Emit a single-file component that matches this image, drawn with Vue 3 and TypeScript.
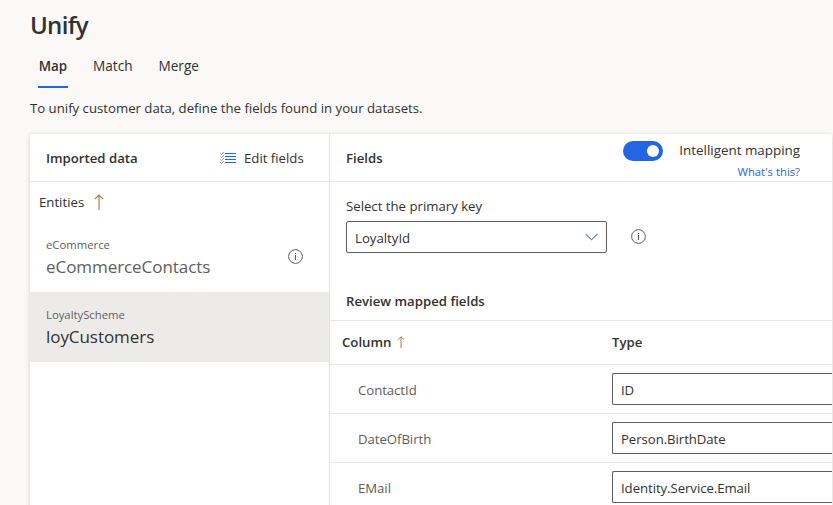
<script setup lang="ts">
import { ref } from 'vue'

interface Entity {
  source: string
  name: string
  info: boolean
}

interface MappedField {
  column: string
  type: string
}

const tabs = ['Map', 'Match', 'Merge']
const activeTab = ref('Map')

const entities: Entity[] = [
  { source: 'eCommerce', name: 'eCommerceContacts', info: true },
  { source: 'LoyaltyScheme', name: 'loyCustomers', info: false },
]
const selectedEntity = ref('loyCustomers')

const mappedFields: MappedField[] = [
  { column: 'ContactId', type: 'ID' },
  { column: 'DateOfBirth', type: 'Person.BirthDate' },
  { column: 'EMail', type: 'Identity.Service.Email' },
]

const intelligentMapping = ref(true)
</script>

<template>
  <main class="page">
    <h1 class="title">Unify</h1>
    <nav class="tabs">
      <a
        v-for="tab in tabs"
        :key="tab"
        class="tab"
        :class="{ active: tab === activeTab }"
        @click="activeTab = tab"
      >{{ tab }}</a>
    </nav>
    <p class="intro">To unify customer data, define the fields found in your datasets.</p>

    <section class="card">
      <aside class="left">
        <header class="panel-head">
          <h2 class="heading">Imported data</h2>
          <button class="edit">
            <svg width="17" height="12" viewBox="0 0 17 12">
              <path d="M5 1.5H16M5 4.5H16M5 7.5H16M5 10.5H16" stroke="#2266e3" fill="none" />
              <path d="M.5 1.4l1 1L4 .2M.5 4.4l1 1L4 3.2M.5 7.4l1 1L4 6.2M.5 10.4l1 1L4 9.2" stroke="#7c8fce" stroke-width=".9" fill="none" />
            </svg>
            <span>Edit fields</span>
          </button>
        </header>
        <div class="sort">
          <span>Entities</span>
          <svg width="10" height="16" viewBox="0 0 10 16">
            <path d="M5 1V16M1 5L5 1L9 5" stroke="#a98057" stroke-width="1.2" fill="none" />
          </svg>
        </div>
        <ul class="entities">
          <li
            v-for="entity in entities"
            :key="entity.name"
            class="entity"
            :class="{ selected: entity.name === selectedEntity }"
            @click="selectedEntity = entity.name"
          >
            <div>
              <div class="source">{{ entity.source }}</div>
              <div class="name">{{ entity.name }}</div>
            </div>
            <svg v-if="entity.info" class="entity-info" width="15" height="15" viewBox="0 0 15 15">
              <circle cx="7.5" cy="7.5" r="6.9" stroke="#605e5c" fill="none" />
              <path d="M7.5 6V11M7.5 4V5" stroke="#605e5c" fill="none" />
            </svg>
          </li>
        </ul>
      </aside>

      <div class="right">
        <header class="panel-head">
          <h2 class="heading">Fields</h2>
          <div class="mapping">
            <button
              class="toggle"
              :class="{ on: intelligentMapping }"
              @click="intelligentMapping = !intelligentMapping"
            ><span class="knob"></span></button>
            <div class="mapping-text">
              <span class="mapping-label">Intelligent mapping</span>
              <a class="help">What's this?</a>
            </div>
          </div>
        </header>

        <div class="key">
          <label class="key-label">Select the primary key</label>
          <div class="key-row">
            <div class="select">
              <span>LoyaltyId</span>
              <svg class="chevron" width="13" height="8" viewBox="0 0 13 8">
                <path d="M.7 1L6.5 6.8L12.3 1" stroke="#6f8ba5" stroke-width="1.1" fill="none" />
              </svg>
            </div>
            <svg class="key-info" width="15" height="15" viewBox="0 0 15 15">
              <circle cx="7.5" cy="7.5" r="6.9" stroke="#605e5c" fill="none" />
              <path d="M7.5 6V11M7.5 4V5" stroke="#605e5c" fill="none" />
            </svg>
          </div>
        </div>

        <h3 class="review">Review mapped fields</h3>

        <div class="row head-row">
          <div class="column-head">
            <span>Column</span>
            <svg width="8" height="12" viewBox="0 0 8 12">
              <path d="M4 .8V12M1 3.8L4 .8L7 3.8" stroke="#b5794a" fill="none" />
            </svg>
          </div>
          <div class="type-head">Type</div>
        </div>
        <div v-for="field in mappedFields" :key="field.column" class="row">
          <div class="column">{{ field.column }}</div>
          <div class="type-box">{{ field.type }}</div>
        </div>
      </div>
    </section>
  </main>
</template>

<style>
html,
body {
  overflow: hidden;
  background: #faf9f8;
}
</style>

<style scoped>
.page {
  box-sizing: border-box;
  width: 833px;
  height: 505px;
  overflow: hidden;
  padding: 8px 1px 0 30px;
  background: #faf9f8;
  color: #323130;
  font: 13.2px/20px 'Open Sans', 'Noto Sans', sans-serif;
  white-space: nowrap;
}
h1, h2, h3, p, ul { margin: 0; padding: 0; }
button {
  border: 0;
  padding: 0;
  background: none;
  color: inherit;
  font: inherit;
}
svg { display: block; flex: none; }

.title { font-size: 24px; line-height: 34px; font-weight: 600; letter-spacing: -0.7px; }
.tabs {
  display: flex;
  gap: 26px;
  height: 46px;
  padding-left: 8px;
  font-size: 13.6px;
}
.tab {
  box-sizing: border-box;
  height: 46px;
  padding-top: 14px;
  border-bottom: 2px solid transparent;
}
.tab.active {
  width: 30px;
  margin-right: -1px;
  text-align: center;
  font-size: 13.4px;
  font-weight: 600;
  border-color: #2266e3;
}
.intro { height: 20px; margin: 10px 0 16px; }

.card {
  display: flex;
  height: 420px;
  background: #fff;
  border-radius: 3px 3px 0 0;
  box-shadow: 0 1px 5px rgba(0, 0, 0, 0.16);
}
.left {
  box-sizing: border-box;
  width: 300px;
  flex: none;
  border-right: 1px solid #e5e4e3;
}
.right { flex: 1; min-width: 0; }
.panel-head {
  box-sizing: border-box;
  display: flex;
  justify-content: space-between;
  height: 48px;
  padding-left: 16px;
  border-bottom: 1px solid #eae9e8;
}
.heading {
  padding-top: 14px;
  font-size: 13.2px;
  line-height: 20px;
  font-weight: 600;
}
.edit {
  display: flex;
  align-items: center;
  gap: 7px;
  height: 48px;
  width: 109px;
}

.sort {
  display: flex;
  align-items: center;
  gap: 10px;
  height: 40px;
  padding-left: 9px;
}
.entities { list-style: none; }
.entity {
  box-sizing: border-box;
  display: flex;
  justify-content: space-between;
  height: 70px;
  padding: 14px 26px 0 16px;
}
.source { font-size: 11.3px; line-height: 18px; color: #605e5c; }
.name { font-size: 17px; line-height: 26px; letter-spacing: -0.06px; color: #605e5c; }
.entity-info { margin-top: 13px; }
.selected { background: #edebe9; }
.selected .name { color: #323130; }

.mapping { display: flex; gap: 16px; padding: 7px 32px 0 0; }
.toggle {
  display: flex;
  align-items: center;
  width: 40px;
  height: 20px;
  padding: 0 4px;
  border-radius: 10px;
  background: #8a8886;
}
.toggle.on { justify-content: flex-end; background: #2266e3; }
.knob { width: 12px; height: 12px; border-radius: 50%; background: #fff; }
.mapping-text { display: flex; flex-direction: column; align-items: flex-end; }
.mapping-label { margin-top: -1px; font-size: 13.4px; }
.help { font-size: 11.3px; line-height: 16px; padding-top: 4px; color: #2266e3; }

.key { padding: 14px 0 0 16px; }
.key-label { display: block; margin-bottom: 5px; }
.key-row { display: flex; align-items: center; gap: 24px; }
.key-info { margin-bottom: 1px; }
.select {
  box-sizing: border-box;
  display: flex;
  align-items: center;
  justify-content: space-between;
  width: 261px;
  height: 32px;
  padding: 1px 8px 0 8px;
  border: 1px solid #605e5c;
  border-radius: 2px;
}
.chevron { margin-bottom: 2px; }
.review {
  padding: 38px 0 9px 16px;
  font-size: 13.2px;
  line-height: 20px;
  font-weight: 600;
}
.row {
  box-sizing: border-box;
  display: flex;
  align-items: center;
  height: 49px;
  border-top: 1px solid #eae9e8;
}
.head-row { height: 44px; font-weight: 600; }
.column-head,
.column {
  box-sizing: border-box;
  flex: none;
  width: 282px;
}
.column-head {
  display: flex;
  align-items: center;
  gap: 6px;
  padding: 0 0 2px 12px;
}
.type-head { padding-bottom: 2px; }
.column { padding: 1px 0 0 28px; color: #605e5c; letter-spacing: -0.05px; }
.type-box {
  box-sizing: border-box;
  flex: 1;
  height: 32px;
  padding: 6px 0 0 8px;
  border: 1px solid #605e5c;
  border-right: 0;
  border-radius: 2px 0 0 2px;
  letter-spacing: -0.06px;
}
</style>
